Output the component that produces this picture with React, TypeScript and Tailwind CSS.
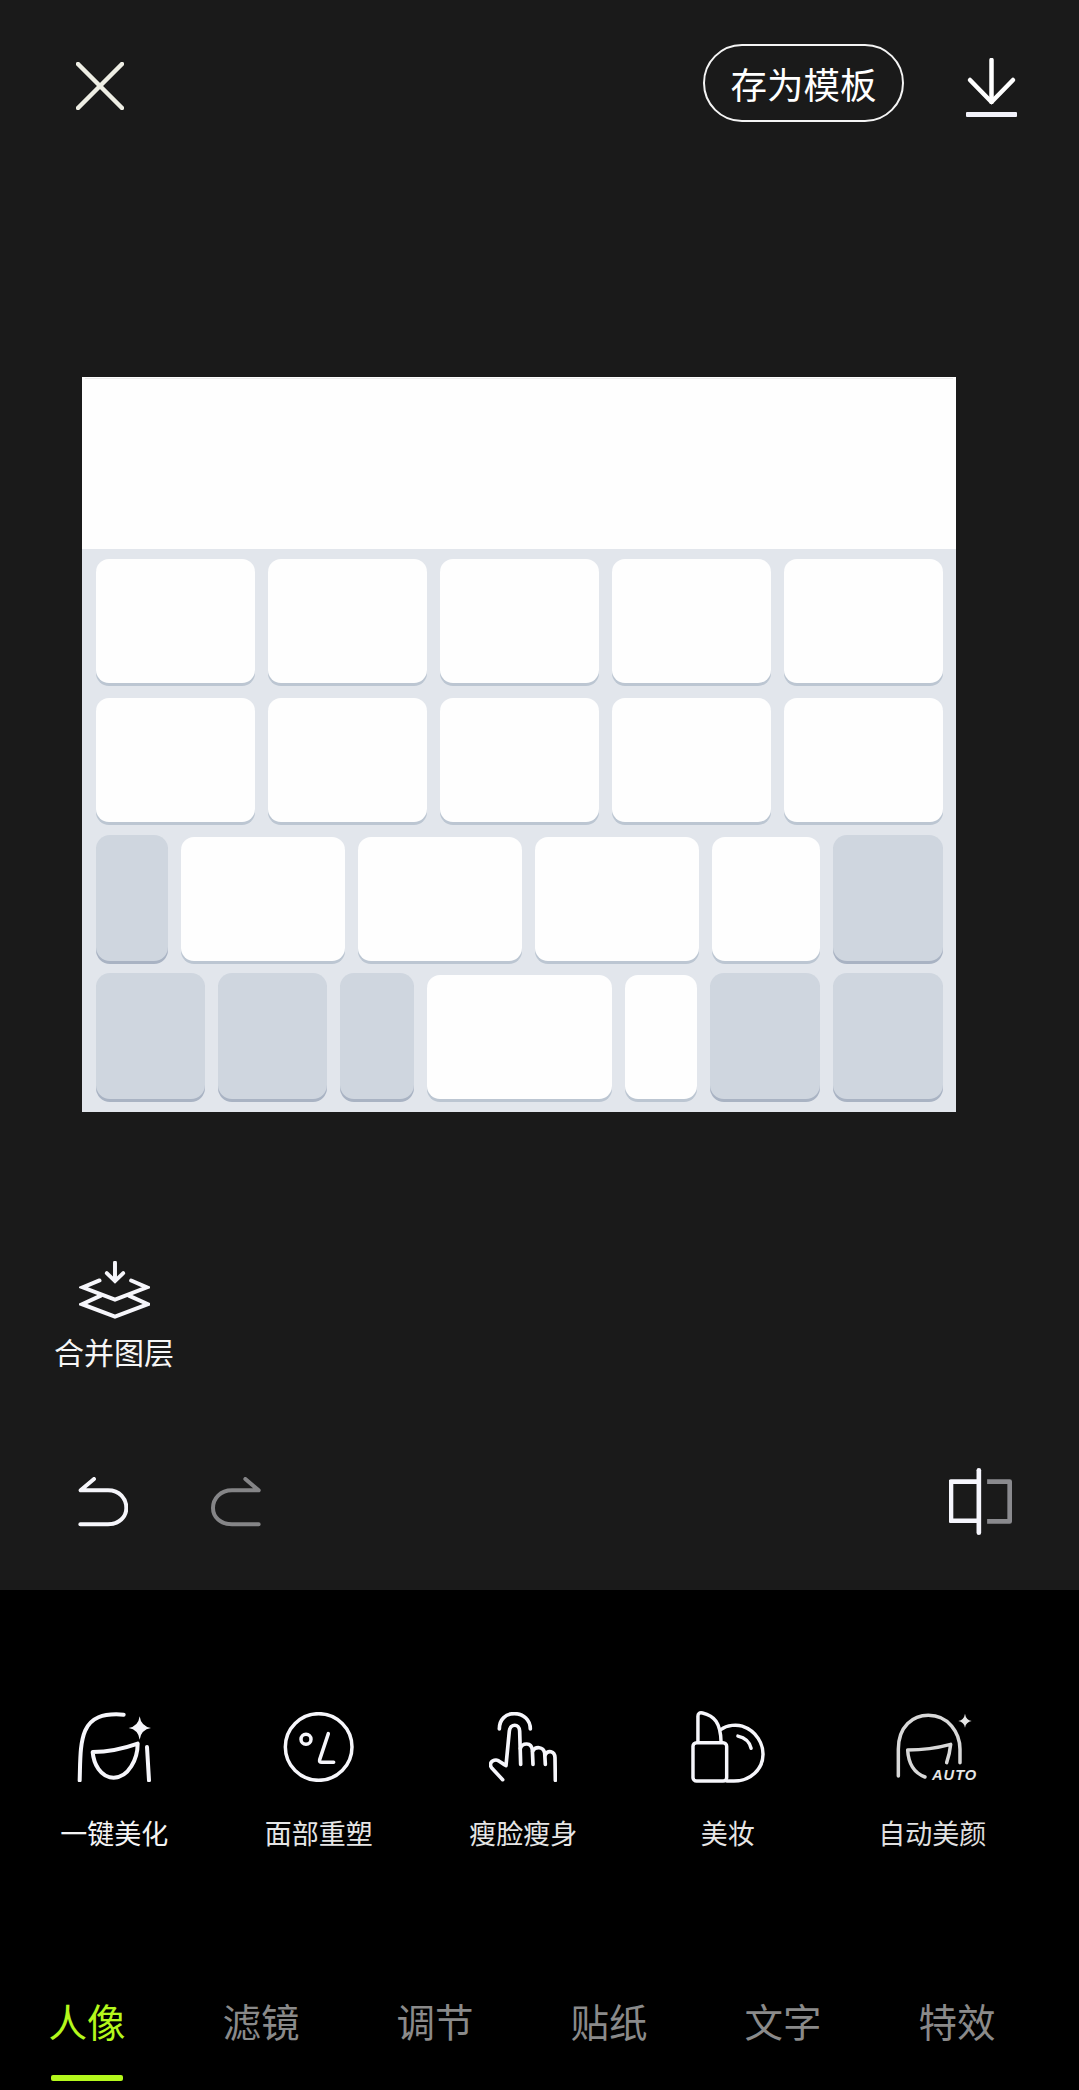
import React from "react";

const FONT = '"Noto Sans CJK SC", "Noto Sans", sans-serif';

function Key({ w, gray }: { w?: string; gray?: boolean }) {
  return (
    <div
      className={
        gray
          ? `${w ?? ""} h-[126px] rounded-[14px] bg-[#cfd6df] shadow-[0_3px_0_#a9b3c3]`
          : `${w ?? ""} h-[124px] rounded-[13px] bg-[#fefefe] shadow-[0_3px_0_#bcc6d2]`
      }
    />
  );
}

function FaceIcon() {
  return (
    <svg width="74" height="70" viewBox="140 95 222 210" fill="none" stroke="#f6f6fb" strokeWidth="12" strokeLinecap="round" strokeLinejoin="round">
      <path d="M148 300 C150 240 148 190 165 150 C182 113 215 98 280 103" />
      <path d="M187 215 C235 215 280 205 322 190 C322 235 295 292 250 292 C210 292 190 250 187 215Z" />
      <path d="M350 200 L356 300" />
      <path d="M328 108 Q332 138 362 143 Q332 148 328 178 Q324 148 295 143 Q324 138 328 108Z" fill="#f6f6fb" stroke="none" />
    </svg>
  );
}

function CircleFaceIcon() {
  return (
    <svg width="72" height="70" viewBox="756 95 216 210" fill="none" stroke="#f6f6fb" strokeWidth="10.5" strokeLinecap="round" strokeLinejoin="round">
      <circle cx="863" cy="200" r="100" />
      <circle cx="825" cy="177" r="15" />
      <path d="M892 160 L866 238 Q864 246 872 246 L908 246" />
    </svg>
  );
}

function HandIcon() {
  return (
    <svg width="68" height="70" viewBox="21 21 204 210" fill="none" stroke="#f6f6fb" strokeWidth="11" strokeLinecap="round" strokeLinejoin="round">
      <path d="M52 72 C52 42 72 26 97 26 C125 26 145 45 145 72" />
      <path d="M62 224 L30 190 C20 178 28 165 42 165 C52 165 62 178 72 182 L82 78 C85 55 112 55 113 78 L116 178" />
      <path d="M115 130 C122 112 148 112 151 134 L153 178" />
      <path d="M152 138 C160 124 184 124 188 144 L190 178" />
      <path d="M189 150 C198 134 218 138 219 158 L220 226" />
    </svg>
  );
}

function LipstickIcon() {
  return (
    <svg width="74" height="72" viewBox="420 95 224 216" fill="none" stroke="#f6f6fb" strokeWidth="10.5" strokeLinecap="round" strokeLinejoin="round">
      <rect x="426" y="190" width="102" height="116" rx="11" />
      <path d="M441 188 L441 110 Q441 97 455 100 C490 108 510 130 511 188" />
      <path d="M511 150 C530 135 560 135 575 140 C620 155 638 195 638 225 C638 270 600 306 550 306 L528 306" />
      <path d="M562 170 C585 175 598 190 602 207" />
    </svg>
  );
}

function AutoFaceIcon() {
  return (
    <svg width="91.33" height="70" viewBox="1006 98 274 210" fill="none" stroke="#d8d8d8" strokeWidth="10.5" strokeLinecap="round" strokeLinejoin="round" className="overflow-visible">
      <path d="M1040 290 L1040 210 C1040 140 1085 108 1130 108 C1190 108 1225 160 1225 210 L1225 250" />
      <path d="M1120 293 C1085 280 1070 250 1068 212 C1110 212 1160 205 1197 195 C1195 215 1190 235 1185 250" />
      <path d="M1240 103 Q1243 122 1260 125 Q1243 128 1240 145 Q1237 128 1220 125 Q1237 122 1240 103Z" fill="#e6e6e6" stroke="none" />
      <text x="1141" y="303" fill="#e6e6e6" stroke="none" fontFamily='"Liberation Sans", sans-serif' fontSize="44" fontWeight="700" fontStyle="italic" letterSpacing="3">AUTO</text>
    </svg>
  );
}

const tools: { label: string; icon: React.ReactNode; tone: string }[] = [
  { label: "一键美化", icon: <FaceIcon />, tone: "text-[#f4f4f4]" },
  { label: "面部重塑", icon: <CircleFaceIcon />, tone: "text-[#e6e6e6]" },
  { label: "瘦脸瘦身", icon: <HandIcon />, tone: "text-[#e6e6e6]" },
  { label: "美妆", icon: <LipstickIcon />, tone: "text-[#e6e6e6]" },
  { label: "自动美颜", icon: <AutoFaceIcon />, tone: "text-[#e0e0e0]" },
];

const tabs = ["人像", "滤镜", "调节", "贴纸", "文字", "特效"];

export default function App() {
  return (
    <div className="w-[1079px] h-[2090px] flex flex-col bg-black overflow-hidden" style={{ fontFamily: FONT }}>
      <div className="h-[1590px] shrink-0 bg-[#1a1a1a] pt-[44px]">
        <div className="flex items-start h-[78px] pl-[76px] pr-[62px]">
          <svg className="mt-[18px]" width="48" height="48" viewBox="0 0 48 48" fill="none" stroke="#eeeee4" strokeWidth="4.5" strokeLinecap="round">
            <path d="M2 2 L46 46" />
            <path d="M46 2 L2 46" />
          </svg>
          <div className="ml-auto w-[201px] h-[78px] pt-[2px] rounded-full border-[2.5px] border-[#f4f4f4] flex items-center justify-center text-[36.5px] leading-[44px] text-white">
            存为模板
          </div>
          <svg className="ml-[62px] mt-[14px]" width="51" height="59" viewBox="0 0 51 59" fill="none" stroke="#ffffff" strokeWidth="4.5" strokeLinecap="round" strokeLinejoin="round">
            <path d="M25.5 2 L25.5 44" />
            <path d="M4 22 L25.5 44 L47 22" />
            <rect x="0" y="54" width="51" height="5" rx="1" fill="#f2f2fa" stroke="none" />
          </svg>
        </div>

        <div className="mt-[255px] ml-[82px] w-[874px] h-[735px] bg-[#e2e6ec]">
          <div className="h-[172px] bg-[#fefefe] pt-px">
            <div className="h-px mx-[3px] bg-[#ebebeb]" />
          </div>
          <div className="pl-[14px] pr-[13px] pt-[10px] flex flex-col">
            <div className="grid grid-cols-5 gap-[13px]">
              <Key /><Key /><Key /><Key /><Key />
            </div>
            <div className="grid grid-cols-5 gap-[13px] mt-[15px]">
              <Key /><Key /><Key /><Key /><Key />
            </div>
            <div className="flex items-end gap-[13px] mt-[13px]">
              <Key gray w="w-[72px]" />
              <Key w="w-[164px]" />
              <Key w="w-[164px]" />
              <Key w="w-[164px]" />
              <Key w="w-[108px]" />
              <Key gray w="w-[110px]" />
            </div>
            <div className="flex items-end gap-[13px] mt-[12px]">
              <Key gray w="w-[109px]" />
              <Key gray w="w-[109px]" />
              <Key gray w="w-[74px]" />
              <Key w="w-[186px]" />
              <Key w="w-[72px]" />
              <Key gray w="w-[110px]" />
              <Key gray w="w-[110px]" />
            </div>
          </div>
        </div>

        <div className="mt-[149px] ml-[55px] w-[118px] flex flex-col items-center">
          <svg width="71" height="58" viewBox="235 63 213 176" fill="none" stroke="#f6f6fb" strokeWidth="12" strokeLinecap="round" strokeLinejoin="miter">
            <path d="M343 68 L343 122" />
            <path d="M318 100 L343 124 L368 100" />
            <path d="M296 122 L245 143 L343 180 L440 143 L392 122" />
            <path d="M300 168 L243 194 L343 232 L443 194 L385 168" />
          </svg>
          <div className="mt-[12px] text-[30px] leading-[40px] text-[#f6f6f6] whitespace-nowrap">合并图层</div>
        </div>

        <div className="mt-[97px] h-[67px] flex items-center pl-[78px] pr-[67px]">
          <svg width="50" height="50" viewBox="235 710 150 150" fill="none" stroke="#f6f6fb" strokeWidth="12" strokeLinecap="round" strokeLinejoin="round">
            <path d="M283 716 L243 750 L325 750 C360 750 380 775 380 803 C380 830 358 852 325 852 L242 852" />
          </svg>
          <svg className="ml-[83px]" width="50" height="50" viewBox="632 710 150 150" fill="none" stroke="#858587" strokeWidth="12" strokeLinecap="round" strokeLinejoin="round">
            <path d="M735 716 L775 750 L695 750 C660 750 638 775 638 803 C638 830 660 852 695 852 L775 852" />
          </svg>
          <svg className="ml-auto" width="63" height="67" viewBox="146 85 190 200" fill="none" strokeWidth="14">
            <path d="M261 125 L329 125 L329 245 L261 245" stroke="#8a8a8e" strokeLinejoin="round" />
            <path d="M236 125 L152 125 L152 243 L236 243" stroke="#f6f6fd" strokeLinejoin="round" />
            <path d="M236 91 L236 279" stroke="#f6f6fd" strokeLinecap="round" />
          </svg>
        </div>
      </div>

      <div className="flex-1 flex flex-col">
        <div className="flex pl-[12px] pt-[122px]">
          {tools.map((t) => (
            <div key={t.label} className="w-[204.5px] flex flex-col items-center">
              <div className="h-[70px] flex items-center justify-center">{t.icon}</div>
              <div className={`mt-[33px] text-[27px] leading-[36px] whitespace-nowrap ${t.tone}`}>{t.label}</div>
            </div>
          ))}
        </div>
        <div className="flex gap-[98px] pl-[49px] mt-[144px]">
          {tabs.map((t, i) => (
            <div key={t} className="w-[76px] flex flex-col items-center">
              <div className={`text-[38.5px] leading-[50px] whitespace-nowrap ${i === 0 ? "text-[#b4f81c]" : "text-[#8a8a8a]"}`}>{t}</div>
              {i === 0 && <div className="mt-[30px] w-[72px] h-[6px] rounded-[2px] bg-[#b4f81c]" />}
            </div>
          ))}
        </div>
      </div>
    </div>
  );
}
